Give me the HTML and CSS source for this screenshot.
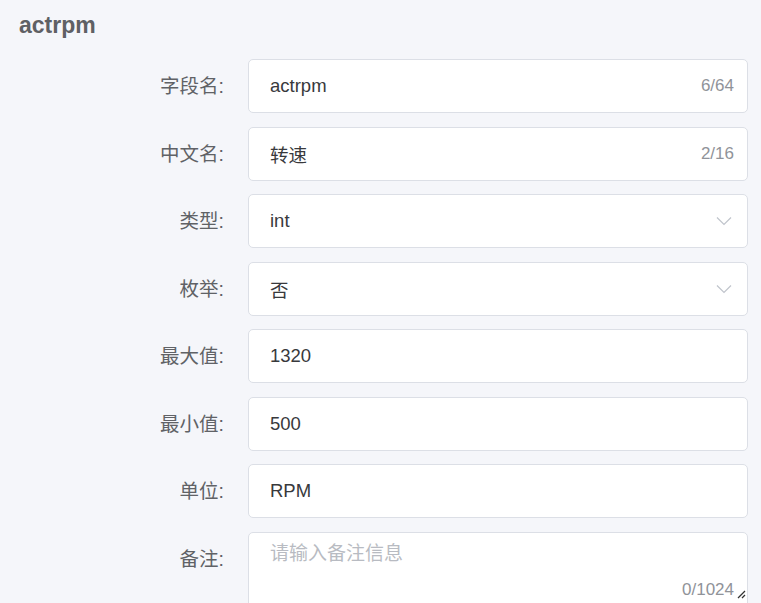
FILE: index.html
```html
<!DOCTYPE html>
<html lang="zh">
<head>
<meta charset="utf-8">
<link rel="stylesheet" href="styles.css">
</head>
<body>
<div class="page">
  <h2 class="title">actrpm</h2>
  <form class="form">
    <div class="row">
      <label class="label">字段名:</label>
      <div class="field">
        <span class="value">actrpm</span>
        <span class="count">6/64</span>
      </div>
    </div>
    <div class="row">
      <label class="label">中文名:</label>
      <div class="field">
        <span class="value">转速</span>
        <span class="count">2/16</span>
      </div>
    </div>
    <div class="row">
      <label class="label">类型:</label>
      <div class="field">
        <span class="value">int</span>
        <svg class="chev" width="16" height="10" viewBox="0 0 16 10"><path d="M1 1.5 L8 8.5 L15 1.5" fill="none" stroke="#c0c4cc" stroke-width="1.2"/></svg>
      </div>
    </div>
    <div class="row">
      <label class="label">枚举:</label>
      <div class="field">
        <span class="value">否</span>
        <svg class="chev" width="16" height="10" viewBox="0 0 16 10"><path d="M1 1.5 L8 8.5 L15 1.5" fill="none" stroke="#c0c4cc" stroke-width="1.2"/></svg>
      </div>
    </div>
    <div class="row">
      <label class="label">最大值:</label>
      <div class="field"><span class="value">1320</span></div>
    </div>
    <div class="row">
      <label class="label">最小值:</label>
      <div class="field"><span class="value">500</span></div>
    </div>
    <div class="row">
      <label class="label">单位:</label>
      <div class="field"><span class="value">RPM</span></div>
    </div>
    <div class="row row-top">
      <label class="label">备注:</label>
      <div class="area">
        <span class="placeholder">请输入备注信息</span>
        <span class="area-count">0/1024</span>
        <svg class="grip" width="10" height="10" viewBox="0 0 10 10"><path d="M9 2 L2 9 M9 6 L6 9" stroke="#333" stroke-width="1.3" fill="none"/></svg>
      </div>
    </div>
  </form>
</div>
</body>
</html>
```

FILE: styles.css
```css
html, body {
  margin: 0;
  padding: 0;
  background: #f5f6fa;
  overflow: hidden;
}
body {
  font-family: "Liberation Sans", "Noto Sans CJK SC", sans-serif;
  color: #606266;
}
.page {
  padding: 9px 13px 0 19px;
}
.title {
  margin: 0;
  font-size: 23px;
  font-weight: bold;
  line-height: 32px;
  color: #5f6064;
}
.form {
  margin-top: 18px;
  display: flex;
  flex-direction: column;
  gap: 13.5px;
}
.row {
  display: flex;
  align-items: center;
}
.row-top {
  align-items: flex-start;
}
.label {
  width: 205px;
  padding-right: 24px;
  text-align: right;
  font-size: 19.5px;
  line-height: 54px;
  color: #606266;
  flex: none;
}
.field {
  width: 500px;
  height: 54px;
  box-sizing: border-box;
  background: #fff;
  border: 1px solid #dcdfe6;
  border-radius: 5px;
  display: flex;
  align-items: center;
  padding: 0 13px 0 21px;
}
.value {
  flex: 1;
  font-size: 18.5px;
  color: #38393c;
}
.count {
  font-size: 17px;
  color: #909399;
}
.chev {
  margin-right: 2px;
}
.area {
  position: relative;
  width: 500px;
  height: 90px;
  box-sizing: border-box;
  background: #fff;
  border: 1px solid #dcdfe6;
  border-radius: 5px;
  padding: 7px 13px 0 21px;
}
.placeholder {
  font-size: 19px;
  line-height: 28px;
  color: #b8bbc2;
}
.area-count {
  position: absolute;
  left: 433px;
  top: 47px;
  font-size: 17px;
  color: #909399;
  background: #fff;
}
.grip {
  position: absolute;
  left: 487px;
  top: 56px;
}
```
